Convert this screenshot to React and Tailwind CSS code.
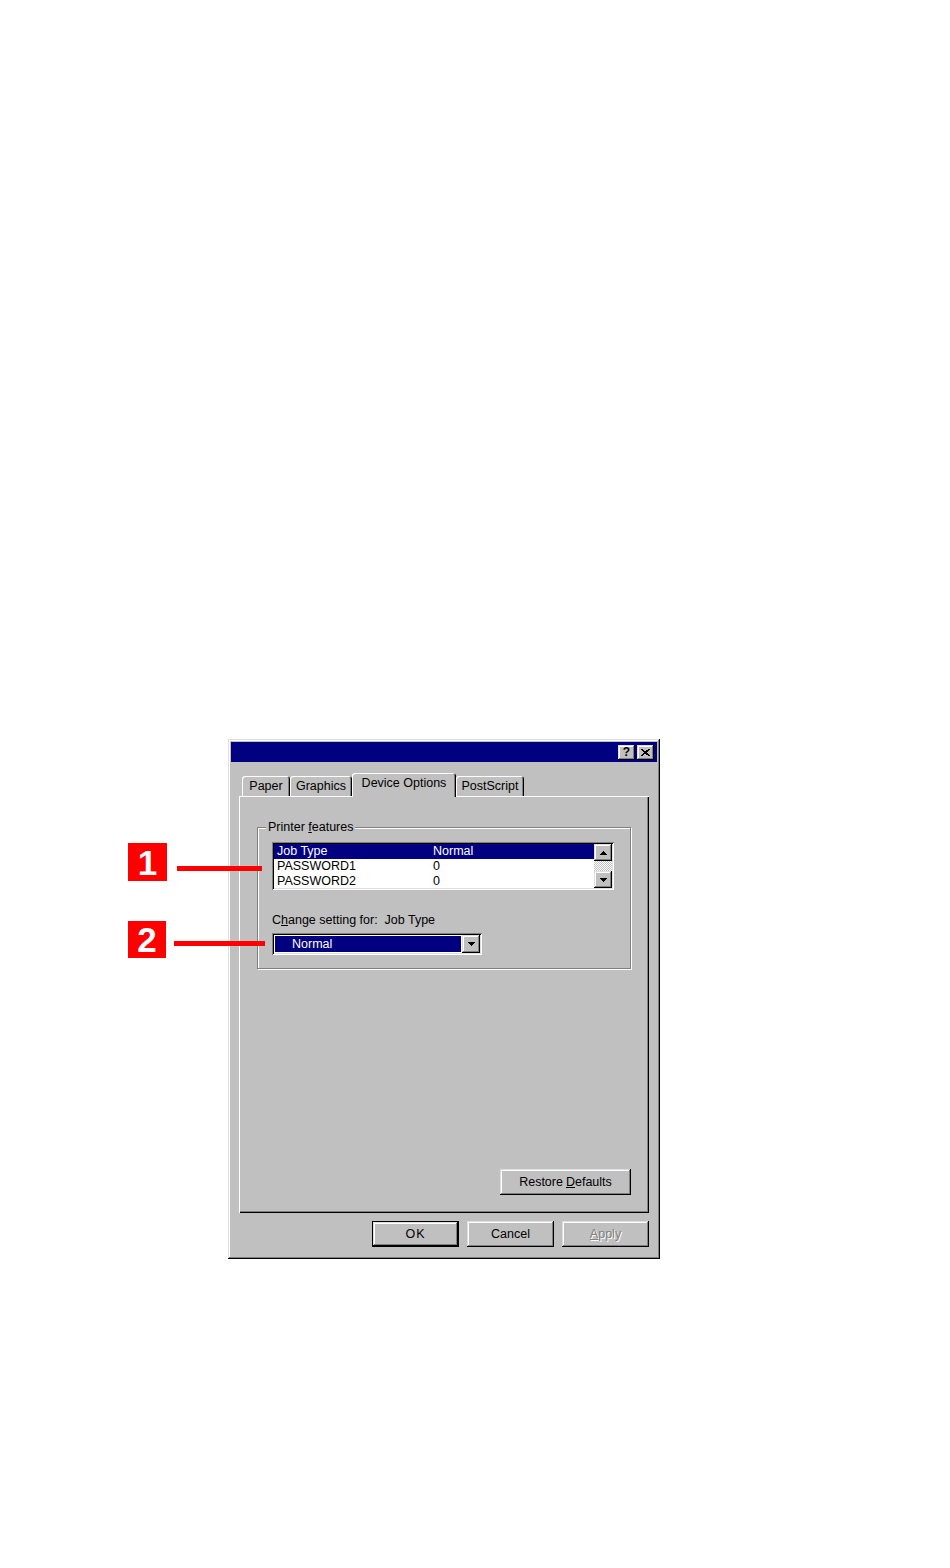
import React from "react";

const raised =
  "shadow-[inset_-1px_-1px_#000,inset_1px_1px_#dfdfdf,inset_-2px_-2px_#808080,inset_2px_2px_#fff]";
const sunken =
  "shadow-[inset_1px_1px_#808080,inset_-1px_-1px_#fff,inset_2px_2px_#000,inset_-2px_-2px_#dfdfdf]";

function UpArrow() {
  return (
    <svg width="7" height="4" viewBox="0 0 7 4" shapeRendering="crispEdges">
      <polygon points="3.5,0 7,4 0,4" fill="#000" />
    </svg>
  );
}
function DownArrow() {
  return (
    <svg width="7" height="4" viewBox="0 0 7 4" shapeRendering="crispEdges">
      <polygon points="0,0 7,0 3.5,4" fill="#000" />
    </svg>
  );
}

function Tab({ label, w, selected }) {
  if (selected) {
    return (
      <div
        className={`relative z-10 -mb-px flex h-[24px] ${w} justify-center rounded-t-[3px] bg-[#c0c0c0] pt-[3px] shadow-[inset_1px_1px_#fff,inset_-1px_0_#000,inset_-2px_0_#808080]`}
      >
        {label}
      </div>
    );
  }
  return (
    <div
      className={`flex h-[20px] ${w} justify-center rounded-t-[3px] bg-[#c0c0c0] pt-[3px] shadow-[inset_1px_1px_#fff,inset_-1px_0_#000,inset_-2px_0_#808080]`}
    >
      {label}
    </div>
  );
}

function Row({ name, value, selected }) {
  return (
    <div
      className={`flex h-[15px] items-center pl-[3px] ${
        selected ? "bg-[#000080] text-white" : "bg-white text-black"
      }`}
    >
      <span className="w-[156px]">{name}</span>
      <span>{value}</span>
    </div>
  );
}

export default function App() {
  return (
    <div className="min-h-[1568px] w-full bg-white pl-[228px] pt-[739px] font-['Liberation_Sans',Arial,sans-serif] text-[12.5px] leading-[14px] text-black">
      <div className="relative w-[432px]">
        {/* callout 1 */}
        <div className="absolute left-[-100px] top-[104px] flex h-[38px] w-[39px] items-center justify-center bg-[#ff0000] text-[35px] font-bold leading-none text-white">
          1
        </div>
        <div className="absolute left-[-51px] top-[127px] h-[5px] w-[85px] bg-[#ff0000]" />
        {/* callout 2 */}
        <div className="absolute left-[-100px] top-[182px] flex h-[37px] w-[38px] items-center justify-center bg-[#ff0000] text-[35px] font-bold leading-none text-white">
          2
        </div>
        <div className="absolute left-[-54px] top-[202px] h-[5px] w-[91px] bg-[#ff0000]" />

        {/* window */}
        <div className={`flex h-[520px] flex-col bg-[#c0c0c0] p-[3px] ${raised}`}>
          {/* title bar */}
          <div className="flex h-[20px] items-center justify-end gap-[2px] bg-[#000080] pr-[3px]">
            <div className={`flex h-[15px] w-[17px] items-center justify-center bg-[#c0c0c0] text-[12px] font-bold leading-none ${raised}`}>
              ?
            </div>
            <div className={`flex h-[15px] w-[17px] items-center justify-center bg-[#c0c0c0] ${raised}`}>
              <svg width="9" height="7" viewBox="0 0 9 7" shapeRendering="crispEdges">
                <path d="M0.5 0 L8.5 7 M8.5 0 L0.5 7" stroke="#000" strokeWidth="1.7" />
              </svg>
            </div>
          </div>

          <div className="flex flex-1 flex-col px-[8px]">
            {/* tabs */}
            <div className="mt-[11px] flex h-[23px] items-end pl-[3px]">
              <Tab label="Paper" w="w-[48px]" />
              <Tab label="Graphics" w="w-[62px]" />
              <Tab label="Device Options" w="w-[104px]" selected />
              <Tab label="PostScript" w="w-[68px]" />
            </div>

            {/* panel */}
            <div className="flex h-[417px] flex-col shadow-[inset_1px_1px_#fff,inset_-1px_-1px_#000,inset_-2px_-2px_#808080]">
              <fieldset className="ml-[18px] mt-[24px] w-[374px] border border-[#808080] px-0 pb-[13px] shadow-[inset_1px_1px_#fff,1px_1px_#fff]">
                <legend className="ml-[8px] bg-[#c0c0c0] px-[2px]">
                  Printer <span className="underline underline-offset-1">f</span>eatures
                </legend>

                <div className="pl-[14px]">
                  {/* listbox */}
                  <div className={`mt-[8px] flex h-[48px] w-[342px] bg-white p-[2px] ${sunken}`}>
                    <div className="flex flex-1 flex-col overflow-hidden">
                      <Row name="Job Type" value="Normal" selected />
                      <Row name="PASSWORD1" value="0" />
                      <Row name="PASSWORD2" value="0" />
                    </div>
                    <div className="flex w-[18px] flex-col">
                      <div className={`flex h-[17px] items-center justify-center bg-[#c0c0c0] ${raised}`}>
                        <UpArrow />
                      </div>
                      <div className="flex-1 bg-[repeating-conic-gradient(#c0c0c0_0_25%,#ffffff_0_50%)] bg-[length:2px_2px]" />
                      <div className={`flex h-[17px] items-center justify-center bg-[#c0c0c0] ${raised}`}>
                        <DownArrow />
                      </div>
                    </div>
                  </div>

                  <div className="mt-[23px] h-[14px]">
                    C<span className="underline underline-offset-1">h</span>ange setting for:&nbsp; Job Type
                  </div>

                  {/* combo */}
                  <div className={`mt-[6px] flex h-[22px] w-[210px] bg-white p-[2px] ${sunken}`}>
                    <div className="m-[1px] flex flex-1 items-center bg-[#000080] pl-[17px] text-white">
                      Normal
                    </div>
                    <div className={`flex w-[18px] items-center justify-center bg-[#c0c0c0] ${raised}`}>
                      <DownArrow />
                    </div>
                  </div>
                </div>
              </fieldset>

              <div className="flex-1" />

              <div className="flex justify-end pb-[18px] pr-[18px]">
                <div className={`flex h-[26px] w-[131px] items-center justify-center bg-[#c0c0c0] ${raised}`}>
                  Restore <span className="ml-[3px] underline underline-offset-1">D</span>efaults
                </div>
              </div>
            </div>

            {/* bottom buttons */}
            <div className="mt-[8px] flex justify-end gap-[8px]">
              <div className="h-[26px] w-[87px] border border-black">
                <div className={`flex h-full w-full items-center justify-center bg-[#c0c0c0] tracking-[1px] ${raised}`}>
                  OK
                </div>
              </div>
              <div className={`flex h-[26px] w-[87px] items-center justify-center bg-[#c0c0c0] ${raised}`}>
                Cancel
              </div>
              <div className={`flex h-[26px] w-[87px] items-center justify-center bg-[#c0c0c0] text-[#808080] [text-shadow:1px_1px_#fff] ${raised}`}>
                <span className="underline underline-offset-1">A</span>pply
              </div>
            </div>
          </div>
        </div>
      </div>
    </div>
  );
}
